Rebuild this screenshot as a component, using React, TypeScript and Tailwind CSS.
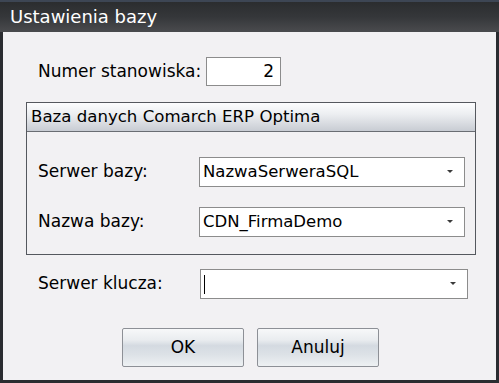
import React from "react";

function Chevron() {
  return (
    <svg width="6" height="4" viewBox="0 0 6 4" className="shrink-0">
      <path d="M0 0 H6 L3 3 Z" fill="#3a3a3a" />
    </svg>
  );
}

function Select({ value, cursor }: { value?: string; cursor?: boolean }) {
  return (
    <div className="flex items-center h-full border border-[#8c8c8c] bg-white pl-[3px] pr-[11px]">
      <div className="flex-1 leading-none text-[16.5px]">
        {cursor ? <span className="inline-block w-[1px] h-[19px] bg-black align-middle" /> : value}
      </div>
      <Chevron />
    </div>
  );
}

function Button({ label }: { label: string }) {
  return (
    <div className="w-[122px] h-[39px] rounded-[2px] border border-[#8d9096] bg-[linear-gradient(to_bottom,#f7f8f9_0%,#e9ecef_30%,#d4dae1_45%,#dde2e7_70%,#eef1f3_100%)] flex items-center justify-center text-[17px] text-black">
      {label}
    </div>
  );
}

export default function App() {
  return (
    <div
      className="w-[499px] h-[383px] flex flex-col bg-[#2a2c30] text-black text-[17px]"
      style={{ fontFamily: '"DejaVu Sans", sans-serif' }}
    >
      <div className="h-[32px] shrink-0 flex flex-col">
        <div className="h-[2px] bg-[#3d4654]" />
        <div className="flex-1 bg-[linear-gradient(to_bottom,#2b2d2f_0%,#35373a_50%,#4a4b4e_100%)] flex items-center pl-[10px] text-white text-[18px] leading-none pb-[0px]">
          Ustawienia bazy
        </div>
      </div>
      <div className="flex-1 ml-[3px] mr-[3px] mb-[3px] bg-[#f2f1f3] flex flex-col">
        <div className="flex items-center mt-[25px] h-[29px] pl-[35px]">
          <span className="w-[168px]">Numer stanowiska:</span>
          <div className="w-[75px] h-full border border-[#8c8c8c] bg-white flex items-center justify-end pr-[6px]">2</div>
        </div>
        <div className="mt-[16px] ml-[23px] w-[450px] h-[153px] border border-[#55585e] flex flex-col">
          <div className="h-[29px] border-b border-[#6a6d73] bg-[linear-gradient(to_bottom,#fdfdfe_0%,#eceef1_40%,#c8ccd3_100%)] flex items-center pl-[4px] text-[16.6px]">
            Baza danych Comarch ERP Optima
          </div>
          <div className="flex items-center mt-[25px] h-[30px] pl-[11px]">
            <span className="w-[161px]">Serwer bazy:</span>
            <div className="w-[266px] h-full"><Select value="NazwaSerweraSQL" /></div>
          </div>
          <div className="flex items-center mt-[20px] h-[30px] pl-[11px]">
            <span className="w-[161px]">Nazwa bazy:</span>
            <div className="w-[266px] h-full"><Select value="CDN_FirmaDemo" /></div>
          </div>
        </div>
        <div className="flex items-center mt-[14px] h-[30px] pl-[35px]">
          <span className="w-[162px]">Serwer klucza:</span>
          <div className="w-[268px] h-full"><Select cursor /></div>
        </div>
        <div className="flex mt-[29px] pl-[119px] gap-[13px]">
          <Button label="OK" />
          <Button label="Anuluj" />
        </div>
      </div>
    </div>
  );
}
